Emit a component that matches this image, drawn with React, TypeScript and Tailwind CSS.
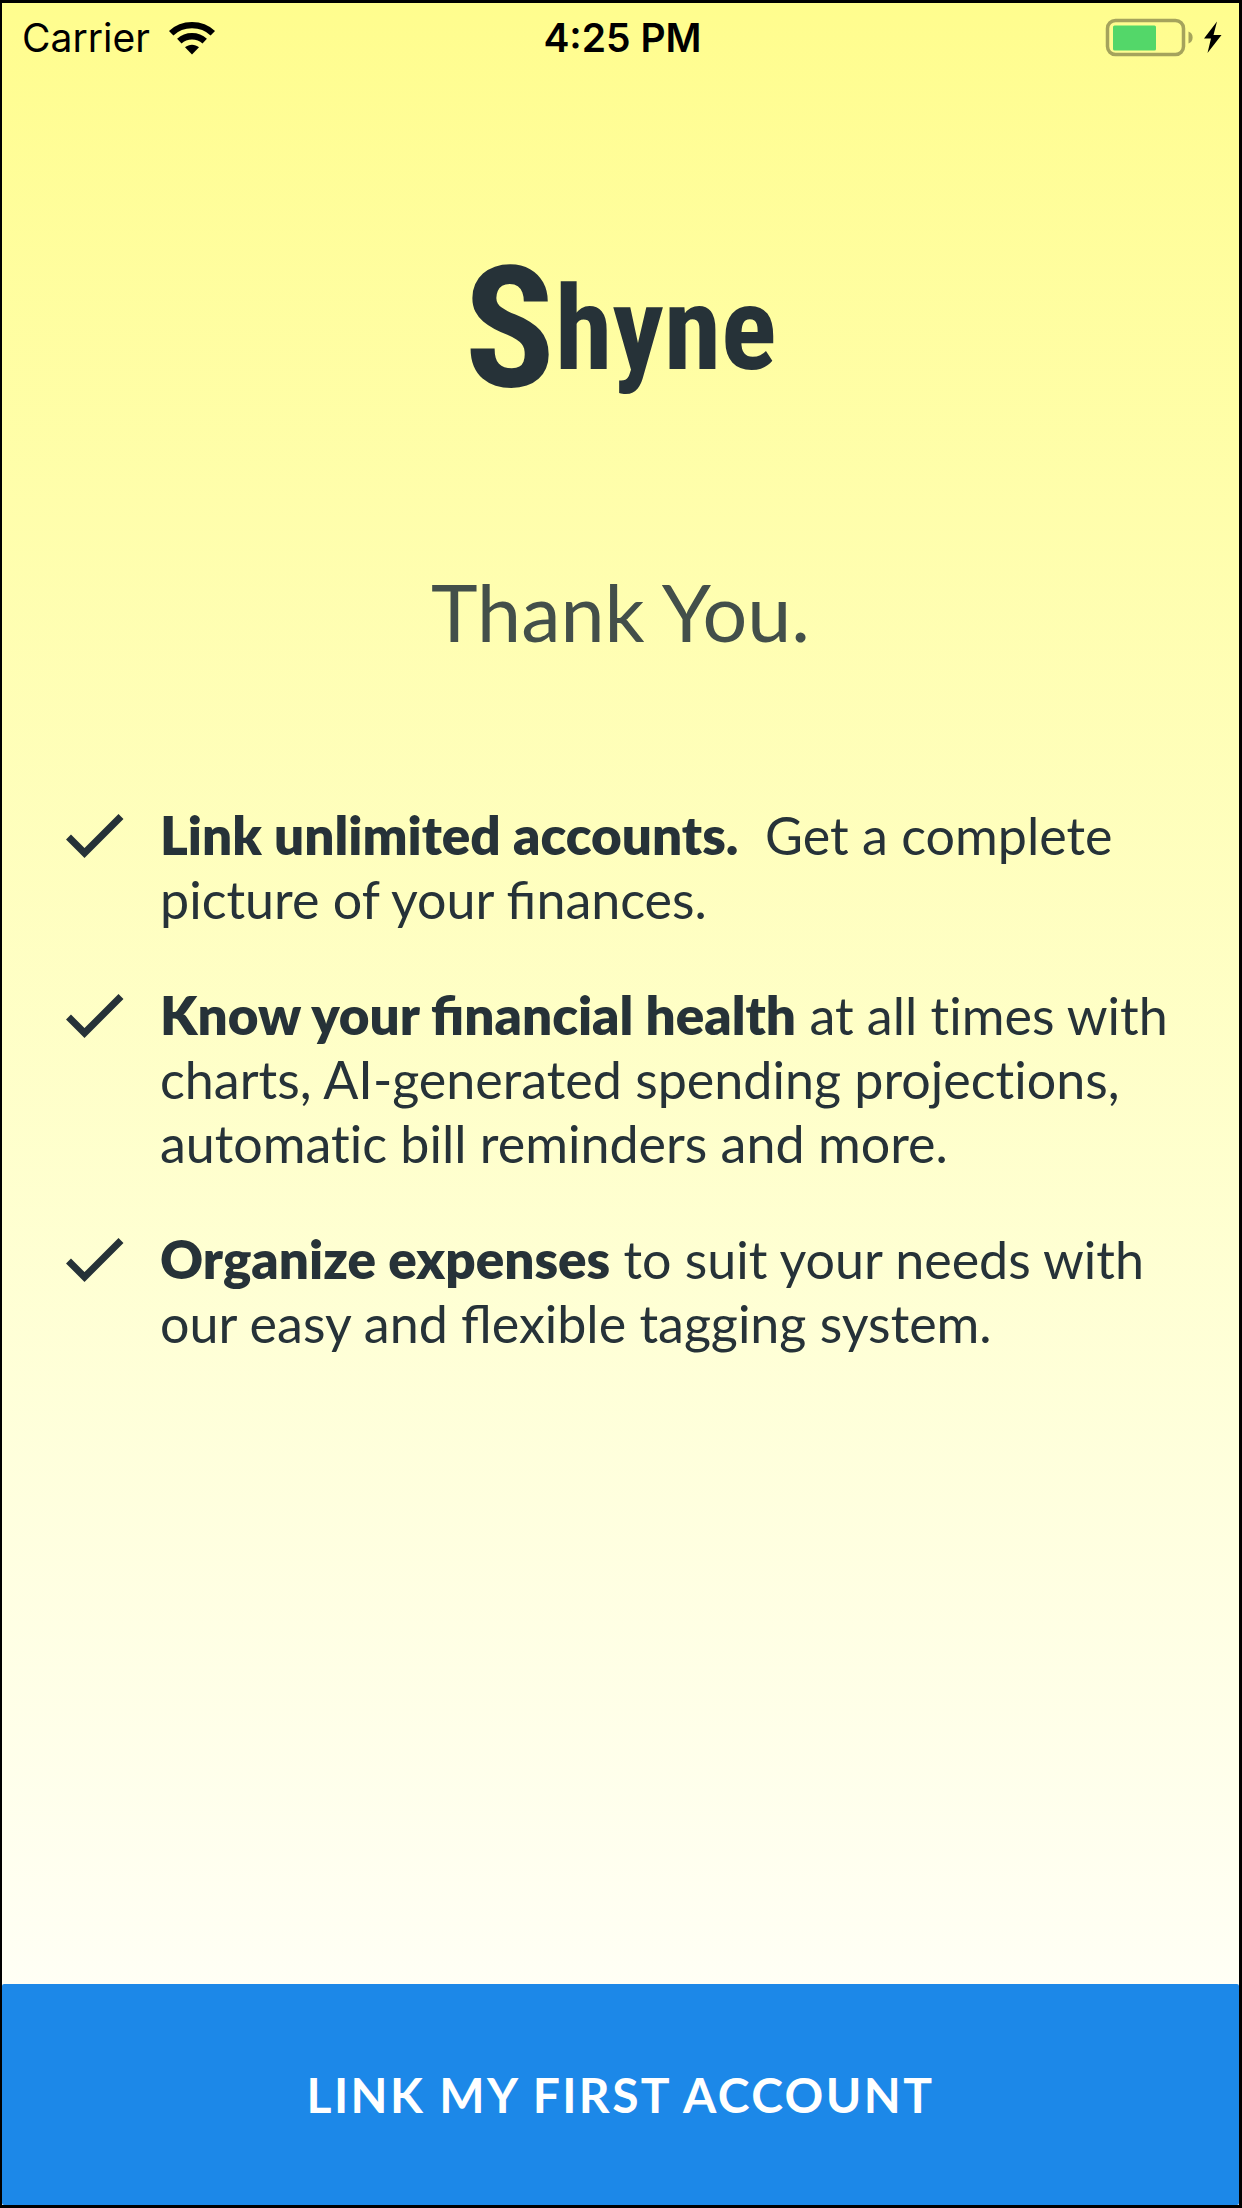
import type { ReactNode } from "react";

function WifiIcon() {
  return (
    <svg viewBox="0 0 48 36" className="h-9 w-12" aria-hidden="true">
      <g fill="none" stroke="#000" strokeWidth="6.4">
        <path d="M3.2 13.2C14.5 2.4 33.5 2.4 44.8 13.2" />
        <path d="M11.3 21.2C18.3 14.6 29.7 14.6 36.7 21.2" />
      </g>
      <path d="M24 34.5L17 27.3C21 23.9 27 23.9 31 27.3Z" />
    </svg>
  );
}

function BatteryIcon() {
  return (
    <svg viewBox="0 0 118 40" className="h-10 w-[118px]" aria-hidden="true">
      <rect x="2.5" y="2.5" width="76" height="34" rx="8" fill="none" stroke="#a5a35c" strokeWidth="3.5" />
      <rect x="8" y="7.5" width="43" height="25" rx="1.5" fill="#53d769" />
      <path d="M83.5 13.5C89 15 89 24 83.5 25.5Z" fill="#a5a35c" />
      <path d="M112 3.500L99 20.500H106L102.500 35L116.500 17H108.500Z" />
    </svg>
  );
}

function CheckIcon() {
  return (
    <svg viewBox="0 0 58 46" className="mt-[10px] h-[46px] w-[58px] shrink-0" fill="none" stroke="#263238" strokeWidth="7" aria-hidden="true">
      <path d="M2.500 24L18.500 40L55 3.500" />
    </svg>
  );
}

function Benefit({ children }: { children: ReactNode }) {
  return (
    <li className="flex items-start gap-9">
      <CheckIcon />
      <p>{children}</p>
    </li>
  );
}

function Plain({ children }: { children: ReactNode }) {
  return <span className="[font-variant-ligatures:none]">{children}</span>;
}

function Lead({ children }: { children: ReactNode }) {
  return <strong className="text-[53px] leading-none font-extrabold">{children}</strong>;
}

export default function App() {
  return (
    <div className="flex min-h-screen flex-col border-y-3 border-l-2 border-r-3 border-black bg-linear-to-b from-[#fffd8e] to-white font-['Lato',sans-serif] text-[#263238]">
      <header className="grid grid-cols-3 items-center pt-3 pr-4 pl-5 font-['Inter',sans-serif] text-[39px] leading-[46px] text-black">
        <div className="flex items-center gap-[18px]">
          <span>Carrier</span>
          <WifiIcon />
        </div>
        <time className="text-center font-semibold">4:25 PM</time>
        <div className="flex justify-end">
          <BatteryIcon />
        </div>
      </header>

      <main className="flex flex-1 flex-col">
        <div className="mt-[188px] flex h-[160px] items-center justify-center font-['Roboto_Condensed','Liberation_Sans_Narrow',sans-serif] font-bold">
          <span className="text-[168px] leading-[160px]">S</span>
          <span className="text-[116px] leading-[160px]">hyne</span>
        </div>
        <h1 className="mt-[155px] text-center text-[79px] leading-[96px] text-[#434f4a]">Thank You.</h1>
        <ul className="mt-[143px] flex flex-col gap-[52px] pr-10 pl-16 text-[52px] leading-[64px]">
          <Benefit>
            <Lead>Link unlimited accounts.</Lead>&nbsp; Get a complete picture of your finances.
          </Benefit>
          <Benefit>
            <Lead>Know your financial health</Lead> at all <Plain>times</Plain> with charts, AI-generated spending <Plain>projections</Plain>, <Plain>automatic</Plain> bill reminders and more.
          </Benefit>
          <Benefit>
            <Lead>Organize expenses</Lead> to suit your needs with our easy and flexible tagging system.
          </Benefit>
        </ul>
      </main>

      <button type="button" className="rounded-xs bg-[#1c88e8] py-[78px] text-[48px] leading-[65px] font-bold tracking-wider text-white">
        LINK MY FIRST ACCOUNT
      </button>
    </div>
  );
}
